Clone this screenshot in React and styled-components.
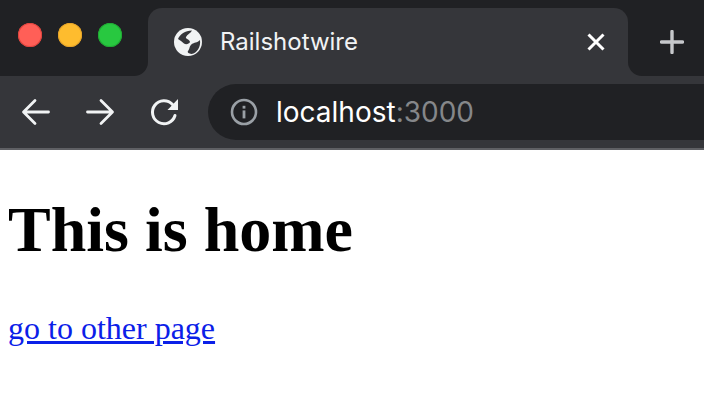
import React from 'react';
import styled, { createGlobalStyle } from 'styled-components';

const Global = createGlobalStyle`
  html, body { margin: 0; padding: 0; background: #fff; overflow: hidden; }
`;

const Chrome = styled.div`
  border-bottom: 2px solid #5f6064;
  background: #35363a;
  font-family: Inter, "Noto Sans", sans-serif;
`;

const TabStrip = styled.div`
  display: flex;
  height: 76px;
`;

const Traffic = styled.div`
  width: 148px;
  box-sizing: border-box;
  padding: 23px 0 0 18px;
  display: flex;
  align-items: flex-start;
  gap: 16px;
  background: #202124;
  border-bottom-right-radius: 14px;
`;

const Light = styled.span`
  width: 24px;
  height: 24px;
  border-radius: 50%;
  background: ${p => p.$color};
  box-shadow: inset 0 0 0 1px ${p => p.$edge};
`;

const TabWrap = styled.div`
  width: 480px;
  padding-top: 8px;
  background: #202124;
`;

const Tab = styled.div`
  height: 68px;
  background: #35363a;
  border-radius: 14px 14px 0 0;
  display: flex;
  align-items: flex-start;
  padding: 20px 18px 0 26px;
  box-sizing: border-box;
`;

const TabTitle = styled.span`
  flex: 1;
  margin-left: 18px;
  font-size: 24px;
  line-height: 28px;
  color: #f1f3f4;
`;

const NewTab = styled.div`
  flex: 1;
  background: #202124;
  border-bottom-left-radius: 14px;
  padding: 30px 0 0 32px;
`;

const Toolbar = styled.div`
  height: 72px;
  display: flex;
  align-items: flex-start;
  padding-top: 8px;
  box-sizing: border-box;
`;

const NavButtons = styled.div`
  width: 208px;
  flex: none;
  display: flex;
  gap: 32px;
  padding: 12px 0 0 20px;
  box-sizing: border-box;
`;

const AddressBar = styled.div`
  flex: 1;
  height: 56px;
  background: #202124;
  border-radius: 28px 0 0 28px;
  display: flex;
  align-items: center;
  padding-left: 22px;
`;

const Url = styled.span`
  margin-left: 18px;
  font-size: 28px;
  color: #fff;
`;

const Port = styled.span`
  color: #85878a;
`;

const Page = styled.main`
  padding: 0 8px;
  font-family: "Liberation Serif", "Times New Roman", serif;
  color: #000;
`;

const Heading = styled.h1`
  font-size: 64px;
  line-height: 74px;
  font-weight: 700;
  margin: 43px 0 43px;
`;

const Link = styled.a`
  font-size: 32px;
  line-height: 37px;
  color: #0b20e8;
  text-decoration: underline;
`;

const Globe = () => (
  <svg width="28" height="28" viewBox="0 0 28 28">
    <circle cx="14" cy="14" r="14" fill="#f1f3f4" />
    <path d="M4 11 C6 6 11 3 18 2.5 C17 5 13 6.5 12 9 C11 11 16 11.5 16 14 C15 16 12 17 10 15.5 C8 14 6 12 4 11 Z" fill="#35363a" />
    <path d="M26 12 C23 15 20 14.5 18 16 C15 18 16 21 14 23 C13 24.5 15 25.5 17.5 26 C23 25 27 19 26 12 Z" fill="#35363a" />
  </svg>
);

const Close = () => (
  <svg width="28" height="28" viewBox="0 0 28 28" fill="none" stroke="#fff" strokeWidth="3">
    <path d="M6.5 6.5 L21.5 21.5 M21.5 6.5 L6.5 21.5" />
  </svg>
);

const Plus = () => (
  <svg width="24" height="24" viewBox="0 0 24 24" fill="none" stroke="#c6c8cb" strokeWidth="3.4" strokeLinecap="round">
    <path d="M12 1.5 V22.5 M1.5 12 H22.5" />
  </svg>
);

const Back = () => (
  <svg width="32" height="32" viewBox="0 0 32 32" fill="none" stroke="#f1f3f4" strokeWidth="2.8" strokeLinecap="round" strokeLinejoin="round">
    <path d="M28.5 16 H4 M15 4.5 L3.5 16 L15 27.5" />
  </svg>
);

const Forward = () => (
  <svg width="32" height="32" viewBox="0 0 32 32" fill="none" stroke="#f1f3f4" strokeWidth="2.8" strokeLinecap="round" strokeLinejoin="round">
    <path d="M3.5 16 H28 M17 4.5 L28.5 16 L17 27.5" />
  </svg>
);

const Reload = () => (
  <svg width="32" height="32" viewBox="0 0 32 32" fill="none">
    <path d="M24.5 8.5 A11.5 11.5 0 1 0 27 19.5" stroke="#f1f3f4" strokeWidth="3" strokeLinecap="round" />
    <path d="M30 3 V14 H19.5 Z" fill="#f1f3f4" />
  </svg>
);

const Info = () => (
  <svg width="28" height="28" viewBox="0 0 28 28" fill="none">
    <circle cx="14" cy="14" r="12" stroke="#9aa0a6" strokeWidth="2.6" />
    <rect x="12.6" y="12.4" width="2.8" height="8" fill="#9aa0a6" />
    <rect x="12.6" y="7.8" width="2.8" height="2.8" fill="#9aa0a6" />
  </svg>
);

export default function App() {
  return (
    <>
      <Global />
      <Chrome>
        <TabStrip>
          <Traffic>
            <Light $color="#ff5f57" $edge="#e0443e" />
            <Light $color="#febc2e" $edge="#e5a32a" />
            <Light $color="#28c840" $edge="#20a934" />
          </Traffic>
          <TabWrap>
            <Tab>
              <Globe />
              <TabTitle>Railshotwire</TabTitle>
              <Close />
            </Tab>
          </TabWrap>
          <NewTab>
            <Plus />
          </NewTab>
        </TabStrip>
        <Toolbar>
          <NavButtons>
            <Back />
            <Forward />
            <Reload />
          </NavButtons>
          <AddressBar>
            <Info />
            <Url>localhost<Port>:3000</Port></Url>
          </AddressBar>
        </Toolbar>
      </Chrome>
      <Page>
        <Heading>This is home</Heading>
        <Link href="#">go to other page</Link>
      </Page>
    </>
  );
}
